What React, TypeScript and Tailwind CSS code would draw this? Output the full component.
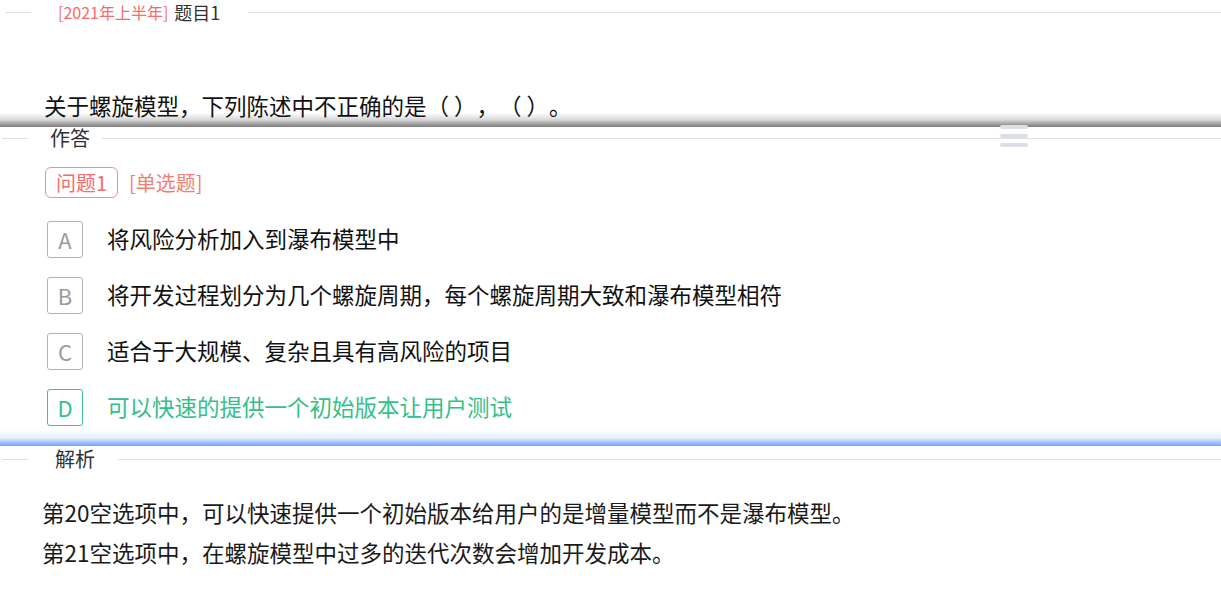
import React from 'react';

const options = [
    { key: 'A', text: '将风险分析加入到瀑布模型中', correct: false },
    { key: 'B', text: '将开发过程划分为几个螺旋周期，每个螺旋周期大致和瀑布模型相符', correct: false },
    { key: 'C', text: '适合于大规模、复杂且具有高风险的项目', correct: false },
    { key: 'D', text: '可以快速的提供一个初始版本让用户测试', correct: true },
];

function SectionTitle({ label, left, gap }: { label: string; left: string; gap: string }) {
    return (
        <div className="flex items-center h-full">
            <div className="ml-[2px] w-[26px] border-t border-[#dcdfe6]"></div>
            <span className={`${left} ${gap} text-[20px] leading-none text-[#303133]`}>{label}</span>
            <div className="flex-1 border-t border-[#dcdfe6]"></div>
        </div>
    );
}

export default function App() {
    return (
        <div
            className="relative w-[1221px] h-[593px] bg-white overflow-hidden text-[#1f1f1f] [text-spacing-trim:space-all]"
            style={{ fontFamily: '"Noto Sans CJK SC", "Liberation Sans", sans-serif' }}
        >
            {/* Header */}
            <div className="h-[24px] flex items-center">
                <div className="ml-[5px] w-[26px] border-t border-[#dcdfe6]"></div>
                <span className="ml-[27px] text-[16px] leading-none text-[#f56c6c]">[2021年上半年]</span>
                <span className="ml-[6px] text-[18px] leading-none text-[#303133]">题目1</span>
                <div className="ml-[28px] flex-1 border-t border-[#dcdfe6]"></div>
            </div>

            {/* Question */}
            <div className="mt-[66px] pl-[44px] text-[22.5px] leading-[30px] text-[#111]">
                关于螺旋模型，下列陈述中不正确的是（ ），（ ）。
            </div>
            <div className="-mt-[7px] h-[14px] bg-linear-to-b from-white/0 via-[#d6d6d6] to-[#7c7c7c]"></div>

            {/* Answer */}
            <div className="relative">
                <div className="h-[22px]">
                    <SectionTitle label="作答" left="ml-[22px]" gap="mr-[12px]" />
                </div>
                <div className="absolute left-[1000px] top-[-2px] flex flex-col gap-[5px]">
                    <div className="w-[28px] h-[4px] rounded-full bg-[#dcdfe6]"></div>
                    <div className="w-[28px] h-[4px] rounded-full bg-[#dcdfe6]"></div>
                    <div className="w-[28px] h-[4px] rounded-full bg-[#dcdfe6]"></div>
                </div>

                <div className="mt-[18px] pl-[45px] flex items-center gap-[11px]">
                    <span className="h-[31px] px-[10px] flex items-center border border-[#f78d86] rounded-[6px] text-[20px] text-[#f56c6c]">
                        问题1
                    </span>
                    <span className="text-[20px] text-[#f07f6f]">[单选题]</span>
                </div>

                <div className="mt-[13px] flex flex-col">
                    {options.map((o) => (
                        <div key={o.key} className="h-[56px] pl-[47px] flex items-center">
                            <span
                                className={
                                    o.correct
                                        ? 'w-[36px] h-[37px] flex items-center justify-center border border-[#3cc48c] rounded-[3px] text-[22px] text-[#34c08a]'
                                        : 'w-[36px] h-[37px] flex items-center justify-center border border-[#b4b4b4] rounded-[3px] text-[22px] text-[#9a9a9a]'
                                }
                            >
                                {o.key}
                            </span>
                            <span
                                className={
                                    o.correct
                                        ? 'ml-[24px] text-[22.5px] text-[#34c08a]'
                                        : 'ml-[24px] text-[22.5px] text-[#111]'
                                }
                            >
                                {o.text}
                            </span>
                        </div>
                    ))}
                </div>
            </div>
            <div className="-mt-[5px] h-[16px] bg-linear-to-b from-white/0 via-[#e3eefe] to-[#6aa4f8]"></div>

            {/* Analysis */}
            <div className="h-[26px]">
                <SectionTitle label="解析" left="ml-[27px]" gap="mr-[23px]" />
            </div>
            <div className="mt-[20px] pl-[42px] text-[22.5px] leading-[40px] text-[#1a1a1a]">
                <p>第20空选项中，可以快速提供一个初始版本给用户的是增量模型而不是瀑布模型。</p>
                <p>第21空选项中，在螺旋模型中过多的迭代次数会增加开发成本。</p>
            </div>
        </div>
    );
}
